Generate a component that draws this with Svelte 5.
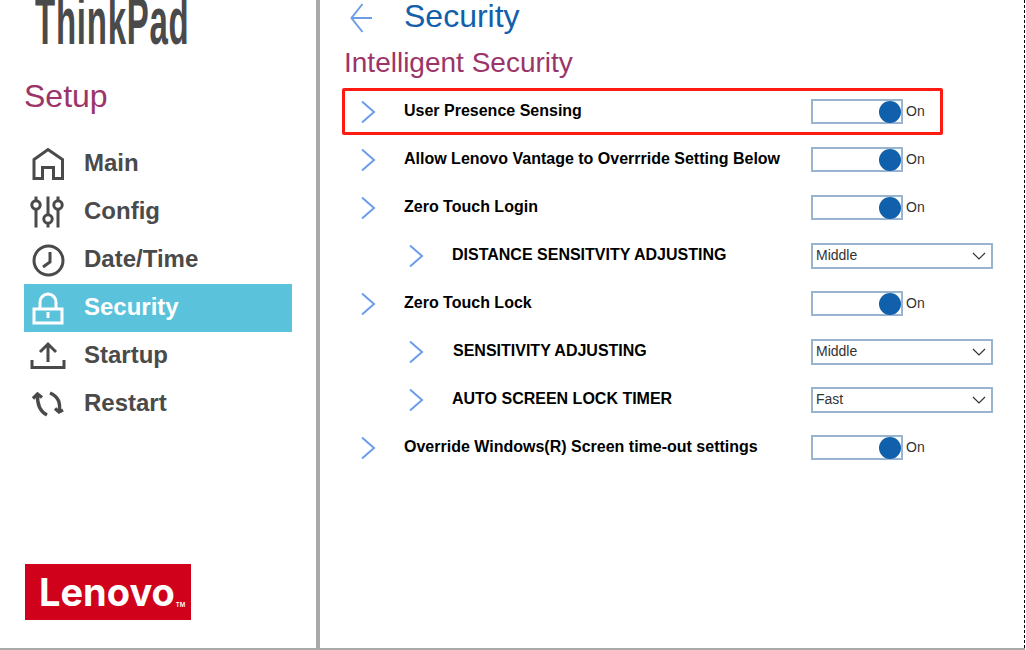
<script>
  const nav = [
    { name: 'Main', icon: 'main' },
    { name: 'Config', icon: 'config' },
    { name: 'Date/Time', icon: 'clock' },
    { name: 'Security', icon: 'lock', active: true },
    { name: 'Startup', icon: 'upload' },
    { name: 'Restart', icon: 'restart' }
  ];
  const rows = [
    { label: 'User Presence Sensing', kind: 'toggle', marked: true },
    { label: 'Allow Lenovo Vantage to Overrride Setting Below', kind: 'toggle' },
    { label: 'Zero Touch Login', kind: 'toggle' },
    { label: 'DISTANCE SENSITVITY ADJUSTING', kind: 'select', value: 'Middle', sub: true },
    { label: 'Zero Touch Lock', kind: 'toggle' },
    { label: 'SENSITIVITY ADJUSTING', kind: 'select', value: 'Middle', sub: true, nudge: true },
    { label: 'AUTO SCREEN LOCK TIMER', kind: 'select', value: 'Fast', sub: true },
    { label: 'Override Windows(R) Screen time-out settings', kind: 'toggle' }
  ];
</script>

<div class="page">
  <aside class="side">
    <div class="brand"><span>ThinkPad</span></div>
    <h2 class="setup">Setup</h2>
    <nav>
      {#each nav as item}
        <div class="nav-item" class:active={item.active}>
          <svg viewBox="0 0 40 40" width="40" height="40" fill="none" stroke="currentColor" stroke-width="3">
            {#if item.icon === 'main'}
              <path d="M6 34.5V15.5L20 5.5l14.5 10v19H25.5V23.5H14.5v11z" />
            {:else if item.icon === 'config'}
              <path d="M8 4.5v4M8 17.5v18M20 4.5v18M20 31.5v4M30 4.5v4M30 17.5v18" />
              <circle cx="8" cy="13" r="4.2" />
              <circle cx="20" cy="27" r="4.2" />
              <circle cx="30" cy="13" r="4.2" />
            {:else if item.icon === 'clock'}
              <circle cx="20.5" cy="20.5" r="14.5" />
              <path d="M22 12v10l-7 5" />
            {:else if item.icon === 'lock'}
              <path d="M6 21h28v14H6zM12 21v-7a8 8 0 0 1 16 0v7" />
              <path d="M20 24v6" />
            {:else if item.icon === 'upload'}
              <path d="M20 8v18M12 16l8-8 8 8" />
              <path d="M4 24v7.5h32V24" />
            {:else}
              <path d="M19 31Q9 26 9.5 11" stroke-width="3.4" />
              <path d="M5 14.5l4.5-4.5 4.5 3.5" stroke-width="3.4" />
              <path d="M22 9q12 5 9 19" stroke-width="3.4" />
              <path d="M27 24.5l4 3.5 4-2" stroke-width="3.4" />
            {/if}
          </svg>
          <span>{item.name}</span>
        </div>
      {/each}
    </nav>
    <div class="lenovo"><span>Lenovo</span><small>TM</small></div>
  </aside>

  <main>
    <header>
      <svg class="back" viewBox="0 0 24 32" width="24" height="32" fill="none" stroke="#6c9ee6" stroke-width="2">
        <path d="M22 16H2M12.5 2L1.5 16l11 14" />
      </svg>
      <h1>Security</h1>
    </header>
    <h2 class="section">Intelligent Security</h2>
    {#each rows as row}
      <div class="row" class:sub={row.sub} class:nudge={row.nudge}>
        {#if row.marked}<div class="mark"></div>{/if}
        <svg class="chev" viewBox="0 0 16 24" width="16" height="24" fill="none" stroke="#6c9ee6" stroke-width="2">
          <path d="M2 1.5L14 12 2 22.5" />
        </svg>
        <div class="label">{row.label}</div>
        {#if row.kind === 'toggle'}
          <div class="toggle-wrap">
            <div class="toggle"><i></i></div>
            <span>On</span>
          </div>
        {:else}
          <div class="select">
            <span>{row.value}</span>
            <svg viewBox="0 0 14 8" width="14" height="8" fill="none" stroke="#333" stroke-width="1.2">
              <path d="M1 1l6 6 6-6" />
            </svg>
          </div>
        {/if}
      </div>
    {/each}
  </main>
</div>

<style>
  :global(body) {
    background: #fff;
    font-family: "Liberation Sans", Arial, sans-serif;
  }
  h1, h2 {
    margin: 0;
    font-weight: 400;
  }
  .page {
    display: flex;
    width: 1025px;
    height: 650px;
    box-sizing: border-box;
    border-bottom: 2px solid #a9a9a9;
    overflow: hidden;
  }

  .side {
    width: 320px;
    flex: none;
    box-sizing: border-box;
    border-right: 4px solid #a9a9a9;
    display: flex;
    flex-direction: column;
    padding-left: 24px;
  }
  .brand {
    height: 62px;
    overflow: hidden;
    margin-bottom: 12px;
  }
  .brand span {
    display: block;
    margin: -17px 0 0 11px;
    font-size: 66px;
    font-weight: 700;
    line-height: 76px;
    letter-spacing: 1.5px;
    color: #4a4a4a;
    white-space: nowrap;
    transform: scaleX(0.5);
    transform-origin: left center;
  }
  .setup {
    font-size: 32px;
    line-height: 44px;
    color: #9b3468;
    margin-bottom: 22px;
  }
  .nav-item {
    width: 268px;
    height: 48px;
    display: flex;
    align-items: center;
    color: #4a4a4a;
    font-size: 24px;
    font-weight: 700;
  }
  .nav-item span {
    margin-top: -2px;
  }
  .nav-item svg {
    margin: 0 16px 0 4px;
    flex: none;
  }
  .nav-item.active {
    background: #5bc2dc;
    color: #fff;
  }
  .lenovo {
    margin: auto 0 28px 1px;
    width: 166px;
    height: 56px;
    box-sizing: border-box;
    padding-left: 14px;
    background: #d0021b;
    color: #fff;
    display: flex;
    align-items: center;
    font-family: Inter, sans-serif;
    font-size: 38px;
    font-weight: 700;
  }
  .lenovo small {
    font-size: 6px;
    font-weight: 600;
    margin: 24px 0 0 1px;
  }

  main {
    flex: 1;
    border-right: 1px dashed #000;
    padding-left: 24px;
  }
  header {
    height: 32px;
    display: flex;
    align-items: center;
  }
  .back {
    margin: 4px 0 0 6px;
    flex: none;
  }
  h1 {
    margin-left: 30px;
    font-size: 32px;
    line-height: 32px;
    color: #1160ab;
  }
  .section {
    font-size: 28px;
    line-height: 62px;
    height: 55px;
    color: #9b3468;
  }
  .row {
    position: relative;
    height: 48px;
    display: grid;
    grid-template-columns: 60px 1fr 213px;
    align-items: center;
    font-size: 16px;
    color: #333;
  }
  .row.sub {
    padding-left: 48px;
  }
  .row.nudge .label {
    padding-left: 1px;
  }
  .mark {
    position: absolute;
    left: -2px;
    width: 601px;
    top: 1px;
    height: 47px;
    box-sizing: border-box;
    border: 3px solid #ff1a12;
    border-radius: 2px;
  }
  .chev {
    margin: 1px 0 0 16px;
  }
  .label {
    font-weight: 700;
    color: #000;
  }
  .toggle-wrap {
    display: flex;
    align-items: center;
    gap: 3px;
    font-size: 14px;
    margin-top: 1px;
  }
  .toggle-wrap span, .select span {
    margin-top: -2px;
  }
  .toggle {
    width: 92px;
    height: 25px;
    box-sizing: border-box;
    border: 2px solid #98b4d0;
    position: relative;
  }
  .toggle i {
    position: absolute;
    right: 0;
    top: 50%;
    transform: translateY(-50%);
    width: 22px;
    height: 22px;
    border-radius: 50%;
    background: #1160ab;
  }
  .select {
    width: 182px;
    height: 26px;
    box-sizing: border-box;
    border: 2px solid #98b4d0;
    padding: 0 5px 0 3px;
    display: flex;
    align-items: center;
    justify-content: space-between;
    font-size: 14px;
    margin-top: 1px;
  }
</style>
